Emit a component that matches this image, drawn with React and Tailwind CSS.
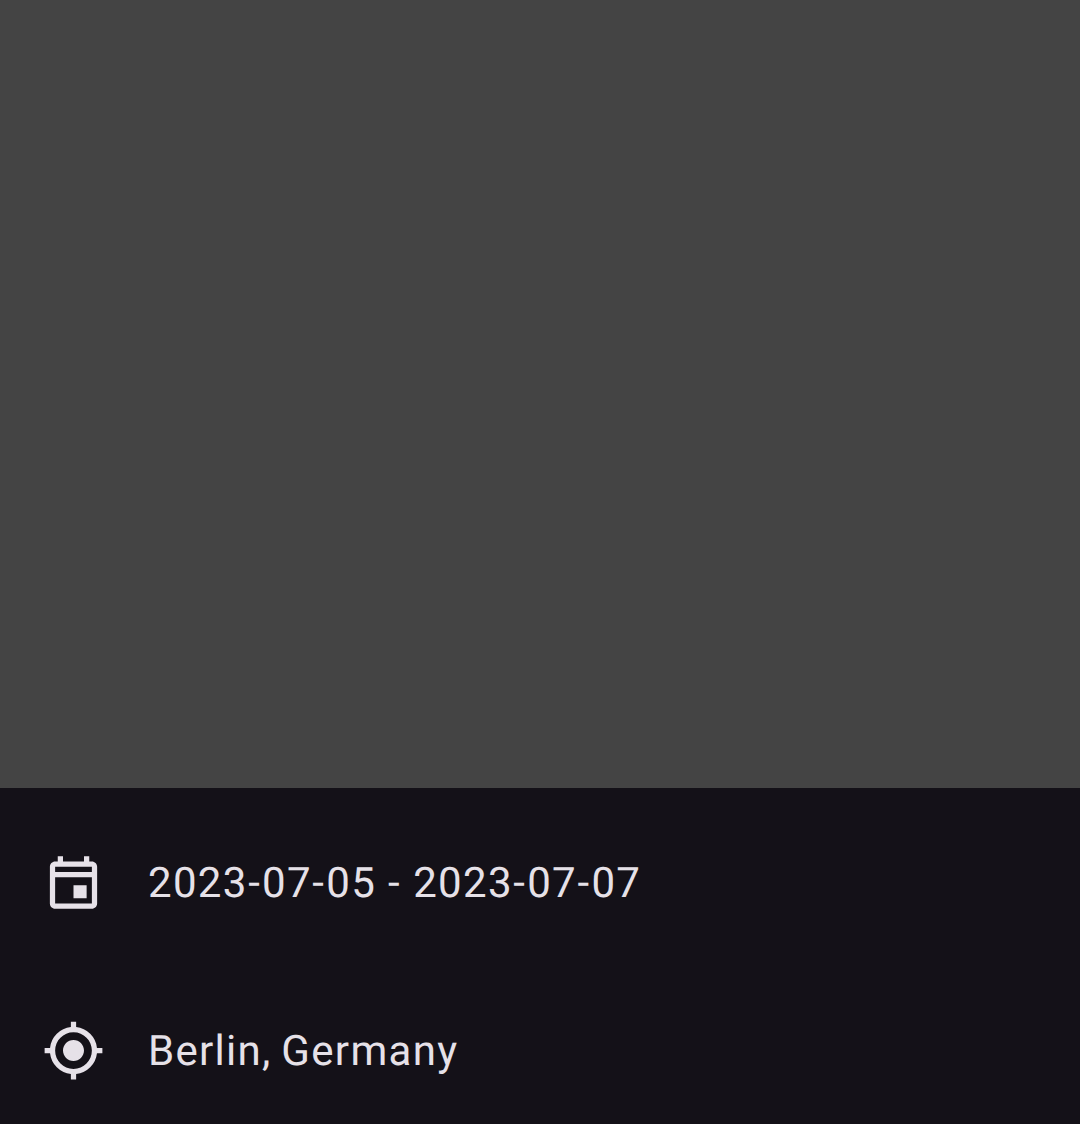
const rows = [
  {
    text: "2023-07-05 - 2023-07-07",
    spacing: "[word-spacing:-0.4px]",
    path: "M19 4h-1V2h-2v2H8V2H6v2H5c-1.11 0-1.99.9-1.99 2L3 20c0 1.1.89 2 2 2h14c1.1 0 2-.9 2-2V6c0-1.1-.9-2-2-2zm0 16H5V10h14v10zm0-12H5V6h14v2zm-7 5h5v5h-5z",
  },
  {
    text: "Berlin, Germany",
    spacing: "[word-spacing:-2px]",
    path: "M12 8c-2.21 0-4 1.79-4 4s1.79 4 4 4 4-1.79 4-4-1.79-4-4-4zm8.94 3A8.994 8.994 0 0 0 13 3.06V1h-2v2.06A8.994 8.994 0 0 0 3.06 11H1v2h2.06A8.994 8.994 0 0 0 11 20.94V23h2v-2.06A8.994 8.994 0 0 0 20.94 13H23v-2h-2.06zM12 19c-3.87 0-7-3.13-7-7s3.13-7 7-7 7 3.13 7 7-3.13 7-7 7z",
  },
];

// Gives hyphens slightly wider side bearings than the other characters.
function Label({ text }) {
  return text.split(/(-)/).map((part, i) =>
    part === "-" ? (
      <span key={i} className="ml-[0.5px] tracking-[2.3px]">-</span>
    ) : (
      part
    )
  );
}

export default function App() {
  return (
    <main className="flex h-[1124px] w-[1080px] flex-col overflow-hidden bg-[#141118] font-['Roboto',sans-serif] text-[#e6e1e8]">
      <div className="h-[788px] shrink-0 bg-[#444444]" />
      <ul className="flex flex-col pt-[10px]">
        {rows.map((row) => (
          <li key={row.text} className="flex h-[168px] shrink-0 items-center pl-[42px]">
            <svg viewBox="0 0 24 24" className="size-[63px] shrink-0 fill-current">
              <path d={row.path} />
            </svg>
            <span className={`ml-[43px] pt-[2px] text-[42px] leading-[63px] tracking-[1.3px] whitespace-nowrap [font-kerning:none] [text-rendering:geometricPrecision] ${row.spacing}`}>
              <Label text={row.text} />
            </span>
          </li>
        ))}
      </ul>
    </main>
  );
}
